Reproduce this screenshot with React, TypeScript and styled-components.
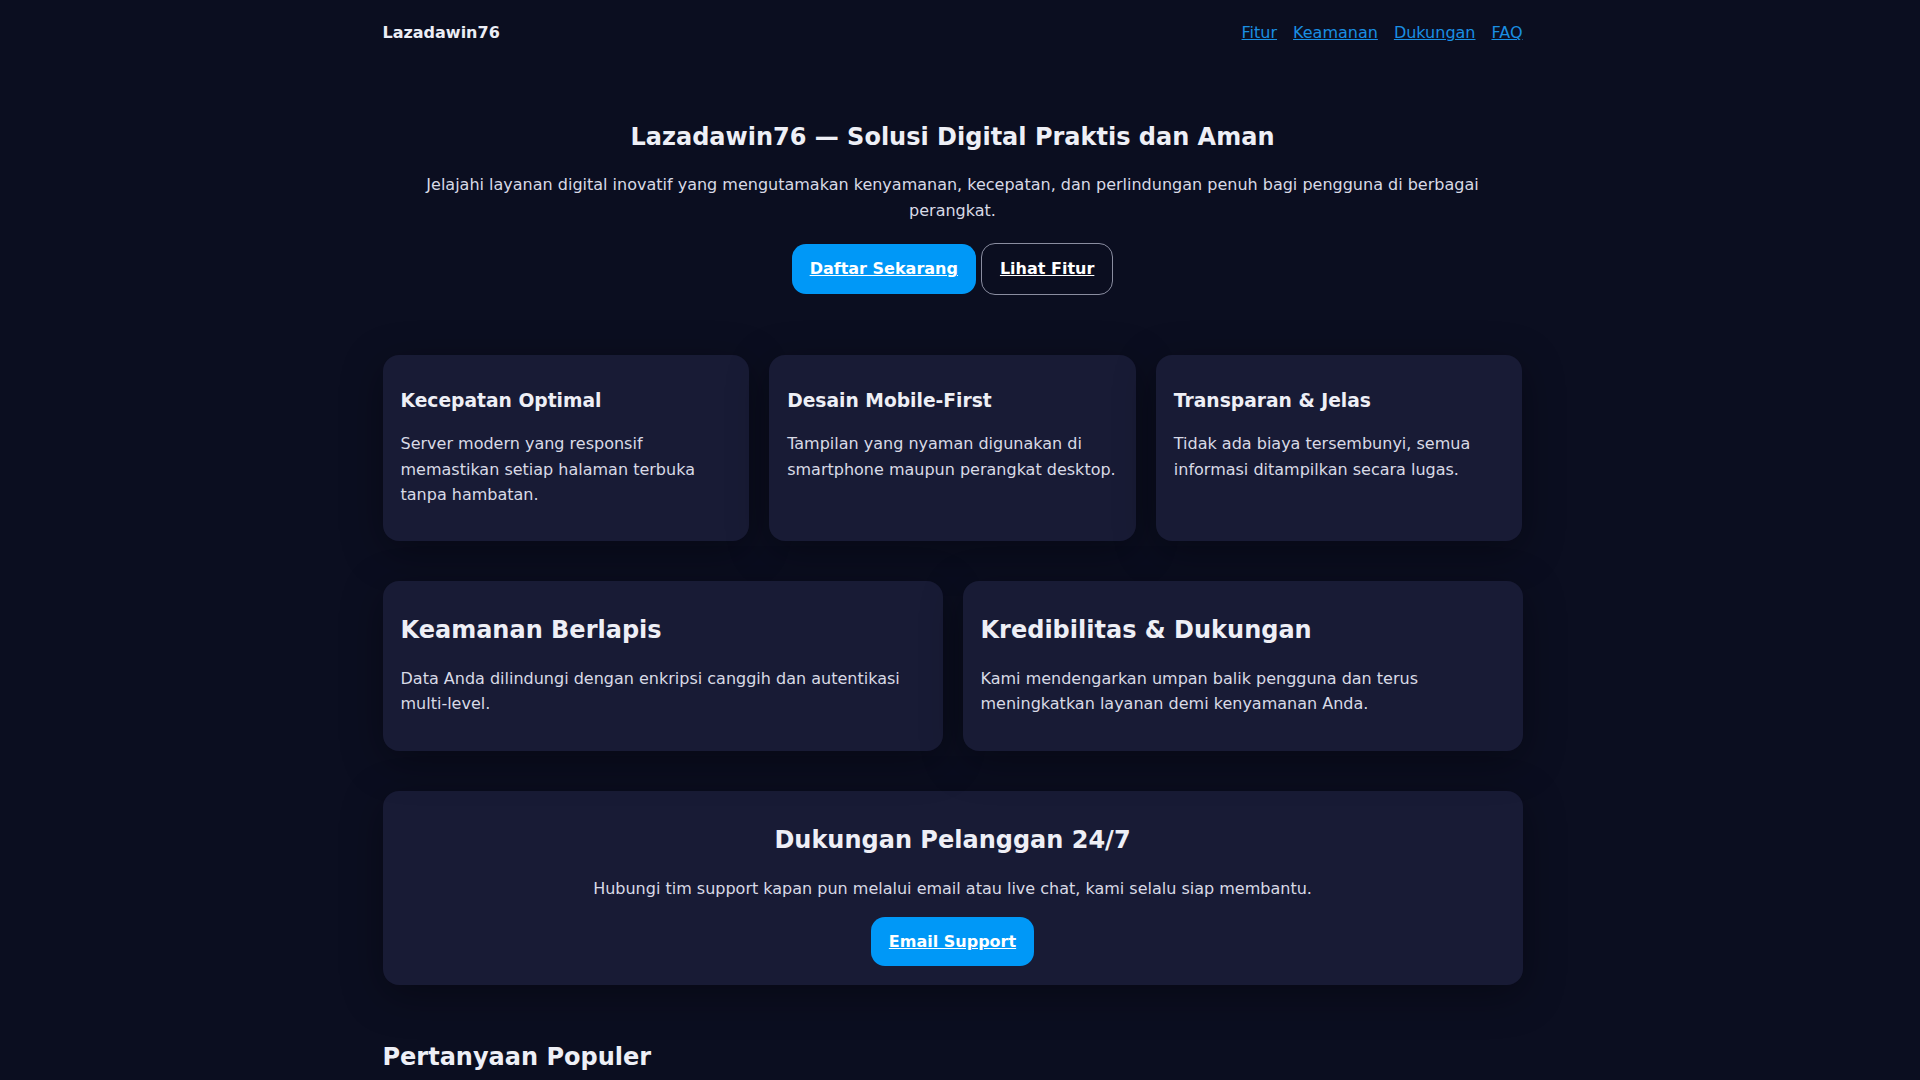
import styled, { createGlobalStyle } from 'styled-components';

const GlobalStyle = createGlobalStyle`
  html, body {
    margin: 0;
    padding: 0;
    background: #0b0e20;
  }
  body {
    font-family: "DejaVu Sans", Verdana, sans-serif;
    color: #e8e9f2;
    font-size: 16px;
    line-height: 1.6;
    padding-right: 15px;
  }
`;

const Page = styled.div`
  max-width: 1140px;
  margin: 0 auto;
`;

const Header = styled.header`
  display: flex;
  justify-content: space-between;
  align-items: center;
  height: 66px;
`;

const Brand = styled.div`
  font-weight: 700;
  font-size: 16px;
  color: #ecedf5;
`;

const Nav = styled.nav`
  display: flex;
  gap: 16px;
`;

const NavLink = styled.a`
  color: #1a8fe3;
  text-decoration: underline;
  font-size: 16px;
`;

const Hero = styled.section`
  text-align: center;
  padding: 56.5px 40px 0;
`;

const HeroTitle = styled.h1`
  font-size: 24px;
  line-height: 1.2;
  margin: 0 0 20.7px;
  color: #eeeff6;
`;

const HeroText = styled.p`
  margin: 0 0 20px;
  color: #d8dae6;
`;

const ButtonRow = styled.div`
  display: flex;
  justify-content: center;
  align-items: center;
  gap: 5px;
`;

const Button = styled.a<{ $variant?: 'primary' | 'outline' }>`
  display: inline-block;
  padding: 14px 18px;
  line-height: 22px;
  border-radius: 14px;
  font-weight: 700;
  font-size: 16px;
  color: #ffffff;
  text-decoration: underline;
  background: ${(p) => (p.$variant === 'outline' ? 'transparent' : '#0098f7')};
  border: ${(p) => (p.$variant === 'outline' ? '1px solid #8a8da0' : '0')};
`;

const Grid = styled.div<{ $cols: number; $top: number }>`
  display: grid;
  grid-template-columns: repeat(${(p) => p.$cols}, 1fr);
  gap: 20px;
  margin-top: ${(p) => p.$top}px;
`;

const Card = styled.div`
  background: #181b35;
  border-radius: 16px;
  padding: 18px;
  box-shadow: 0 10px 40px rgba(0, 0, 0, 0.35);
`;

const CardTitle = styled.h3<{ $large?: boolean }>`
  font-size: ${(p) => (p.$large ? '24px' : '18.7px')};
  line-height: 1.2;
  margin: ${(p) => (p.$large ? '17px 0 21px' : '16.5px 0 19px')};
  color: #eeeff6;
`;

const CardText = styled.p<{ $large?: boolean }>`
  margin: 0 0 ${(p) => (p.$large ? '16px' : '15px')};
  color: #d8dae6;
`;

const SupportCard = styled(Card)`
  margin-top: 40px;
  padding-bottom: 19px;
  text-align: center;
`;

const SupportTitle = styled.h2`
  font-size: 24px;
  line-height: 1.2;
  margin: 17.5px 0 20.5px;
  color: #eeeff6;
`;

const SupportText = styled.p`
  margin: 0 0 16px;
  color: #d8dae6;
`;

const SupportButton = styled(Button)`
  line-height: 21px;
`;

const FaqSection = styled.section`
  margin-top: 58px;
  padding-bottom: 60px;
`;

const FaqHeading = styled.h2`
  font-size: 24px;
  line-height: 1.2;
  margin: 0 0 24px;
  color: #eeeff6;
`;

const FaqItem = styled.details`
  background: #181b35;
  border-radius: 12px;
  padding: 16px 18px;
  margin-bottom: 14px;
  summary {
    font-weight: 700;
    cursor: pointer;
  }
  p {
    margin: 10px 0 0;
    color: #d8dae6;
  }
`;

const features = [
  {
    title: 'Kecepatan Optimal',
    text: 'Server modern yang responsif memastikan setiap halaman terbuka tanpa hambatan.',
  },
  {
    title: 'Desain Mobile-First',
    text: 'Tampilan yang nyaman digunakan di smartphone maupun perangkat desktop.',
  },
  {
    title: 'Transparan & Jelas',
    text: 'Tidak ada biaya tersembunyi, semua informasi ditampilkan secara lugas.',
  },
];

const highlights = [
  {
    title: 'Keamanan Berlapis',
    text: 'Data Anda dilindungi dengan enkripsi canggih dan autentikasi multi-level.',
  },
  {
    title: 'Kredibilitas & Dukungan',
    text: 'Kami mendengarkan umpan balik pengguna dan terus meningkatkan layanan demi kenyamanan Anda.',
  },
];

const faqs = [
  {
    q: 'Bagaimana cara mendaftar di Lazadawin76?',
    a: 'Klik tombol Daftar Sekarang, isi data yang diminta, lalu ikuti langkah verifikasi.',
  },
  {
    q: 'Apakah data saya aman?',
    a: 'Ya, seluruh data dilindungi dengan enkripsi dan autentikasi multi-level.',
  },
  {
    q: 'Bisakah saya mengakses layanan dari ponsel?',
    a: 'Tentu, tampilan kami dirancang mobile-first sehingga nyaman di semua perangkat.',
  },
  {
    q: 'Bagaimana menghubungi tim support?',
    a: 'Hubungi kami melalui email atau live chat kapan pun, 24 jam setiap hari.',
  },
  {
    q: 'Apakah ada biaya tersembunyi?',
    a: 'Tidak ada. Semua informasi biaya ditampilkan secara jelas dan transparan.',
  },
];

const App = () => {
  return (
    <>
      <GlobalStyle />
      <Page>
        <Header>
          <Brand>Lazadawin76</Brand>
          <Nav>
            <NavLink href="#fitur">Fitur</NavLink>
            <NavLink href="#keamanan">Keamanan</NavLink>
            <NavLink href="#dukungan">Dukungan</NavLink>
            <NavLink href="#faq">FAQ</NavLink>
          </Nav>
        </Header>

        <Hero>
          <HeroTitle>Lazadawin76 — Solusi Digital Praktis dan Aman</HeroTitle>
          <HeroText>
            Jelajahi layanan digital inovatif yang mengutamakan kenyamanan, kecepatan, dan
            perlindungan penuh bagi pengguna di berbagai perangkat.
          </HeroText>
          <ButtonRow>
            <Button href="#daftar">Daftar Sekarang</Button>
            <Button href="#fitur" $variant="outline">
              Lihat Fitur
            </Button>
          </ButtonRow>
        </Hero>

        <Grid $cols={3} $top={60} id="fitur">
          {features.map((f) => (
            <Card key={f.title}>
              <CardTitle>{f.title}</CardTitle>
              <CardText>{f.text}</CardText>
            </Card>
          ))}
        </Grid>

        <Grid $cols={2} $top={40} id="keamanan">
          {highlights.map((h) => (
            <Card key={h.title}>
              <CardTitle $large>{h.title}</CardTitle>
              <CardText $large>{h.text}</CardText>
            </Card>
          ))}
        </Grid>

        <SupportCard id="dukungan">
          <SupportTitle>Dukungan Pelanggan 24/7</SupportTitle>
          <SupportText>
            Hubungi tim support kapan pun melalui email atau live chat, kami selalu siap membantu.
          </SupportText>
          <SupportButton href="#email">Email Support</SupportButton>
        </SupportCard>

        <FaqSection id="faq">
          <FaqHeading>Pertanyaan Populer</FaqHeading>
          {faqs.map((f) => (
            <FaqItem key={f.q}>
              <summary>{f.q}</summary>
              <p>{f.a}</p>
            </FaqItem>
          ))}
        </FaqSection>
      </Page>
    </>
  );
};

export default App;
